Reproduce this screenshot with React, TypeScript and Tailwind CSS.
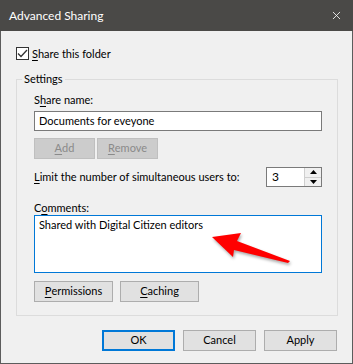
import { X } from "lucide-react";

// ---------- small pieces ----------
function Key({ c }: { c: string }) {
  return <span className="underline underline-offset-[2px] decoration-[1px]">{c}</span>;
}

function Btn({
  children,
  w,
  disabled,
  primary,
}: {
  children: React.ReactNode;
  w: string;
  disabled?: boolean;
  primary?: boolean;
}) {
  if (disabled) {
    return (
      <div className={`${w} h-[21px] flex items-center justify-center border border-[#bfbfbf] bg-[#cccccc] text-[#8a8a8a]`}>
        {children}
      </div>
    );
  }
  if (primary) {
    return (
      <div className={`${w} h-[21px] flex items-center justify-center border-2 border-[#0078d7] bg-[#e1e1e1] text-black`}>
        {children}
      </div>
    );
  }
  return (
    <div className={`${w} h-[21px] flex items-center justify-center border border-[#adadad] bg-[#e1e1e1] text-black`}>
      {children}
    </div>
  );
}

function Spin() {
  return (
    <div className="w-[56px] h-[20px] flex border border-[#7a7a7a] bg-white">
      <div className="flex-1 pl-[5px] leading-[18px] text-[12px]">3</div>
      <div className="w-[17px] flex flex-col border-l border-[#cfcfcf] bg-[#f0f0f0]">
        <div className="flex-1 flex items-center justify-center border-b border-[#cfcfcf]">
          <svg width="7" height="4" viewBox="0 0 7 4">
            <path d="M3.5 0 L7 4 L0 4 Z" fill="#000" />
          </svg>
        </div>
        <div className="flex-1 flex items-center justify-center">
          <svg width="7" height="4" viewBox="0 0 7 4">
            <path d="M0 0 L7 0 L3.5 4 Z" fill="#000" />
          </svg>
        </div>
      </div>
    </div>
  );
}

function RedArrow() {
  return (
    <svg
      className="absolute left-[169px] top-[12px]"
      width="90"
      height="40"
      viewBox="0 0 90 40"
      style={{ filter: "drop-shadow(1px 2px 1.5px rgba(0,0,0,0.35))" }}
    >
      <polygon points="8,9 37,5 33,13 86,33 84,35 30,22 29,29" fill="#ff0000" />
    </svg>
  );
}

// ---------- main ----------
export default function App() {
  return (
    <div
      className="w-[353px] h-[364px] flex flex-col bg-[#f0f0f0] text-[11px] text-black"
      style={{ fontFamily: 'Lato, "Noto Sans", sans-serif' }}
    >
      {/* title bar */}
      <div className="h-[31px] flex items-center justify-between bg-[#4a4947] text-white pl-[9px] pr-[10px]">
        <span className="text-[12px]">Advanced Sharing</span>
        <X className="w-[13px] h-[13px]" strokeWidth={1.5} />
      </div>

      {/* body */}
      <div className="flex-1 flex flex-col border-x border-b border-[#5c5c5c]">
        <label className="mt-[16px] ml-[15px] flex items-center gap-[3px] h-[13px]">
          <span className="w-[13px] h-[13px] border border-[#333333] bg-white flex items-center justify-center">
            <svg width="11" height="9" viewBox="0 0 11 9">
              <path d="M1 4.5 L4 7.5 L10 1" stroke="#333" strokeWidth="1.3" fill="none" />
            </svg>
          </span>
          <span className="leading-[16px]">
            <Key c="S" />hare this folder
          </span>
        </label>

        <fieldset className="mt-[11px] ml-[15px] w-[322px] h-[245px] border border-[#dcdcdc] pl-[17px]">
          <legend className="-ml-[12px] px-[2px] leading-[16px]">Settings</legend>

          <div className="mt-[5px] leading-[16px]">
            S<Key c="h" />are name:
          </div>
          <div className="mt-[3px] w-[288px] h-[20px] border border-[#7a7a7a] bg-white pl-[4px] leading-[18px]">
            Documents for eveyone
          </div>

          <div className="mt-[7px] flex gap-[2px]">
            <Btn w="w-[61px]" disabled>
              <Key c="A" />dd
            </Btn>
            <Btn w="w-[61px]" disabled>
              <Key c="R" />emove
            </Btn>
          </div>

          <div className="mt-[8px] w-[288px] flex items-center justify-between">
            <span className="whitespace-nowrap">
              <Key c="L" />imit the number of simultaneous users to:
            </span>
            <Spin />
          </div>

          <div className="mt-[14px] leading-[14px]">
            C<Key c="o" />mments:
          </div>
          <div className="relative w-[288px] h-[58px] border border-[#0078d7] bg-white pl-[4px] pt-[1px] leading-[16px]">
            Shared with Digital Citizen editors
            <RedArrow />
          </div>

          <div className="mt-[8px] flex gap-[7px]">
            <Btn w="w-[79px]">
              <Key c="P" />ermissions
            </Btn>
            <Btn w="w-[79px]">
              <Key c="C" />aching
            </Btn>
          </div>
        </fieldset>

        <div className="mt-[14px] mr-[15px] flex justify-end gap-[8px]">
          <Btn w="w-[73px]" primary>
            OK
          </Btn>
          <Btn w="w-[73px]">Cancel</Btn>
          <Btn w="w-[73px]">Apply</Btn>
        </div>
      </div>
    </div>
  );
}
